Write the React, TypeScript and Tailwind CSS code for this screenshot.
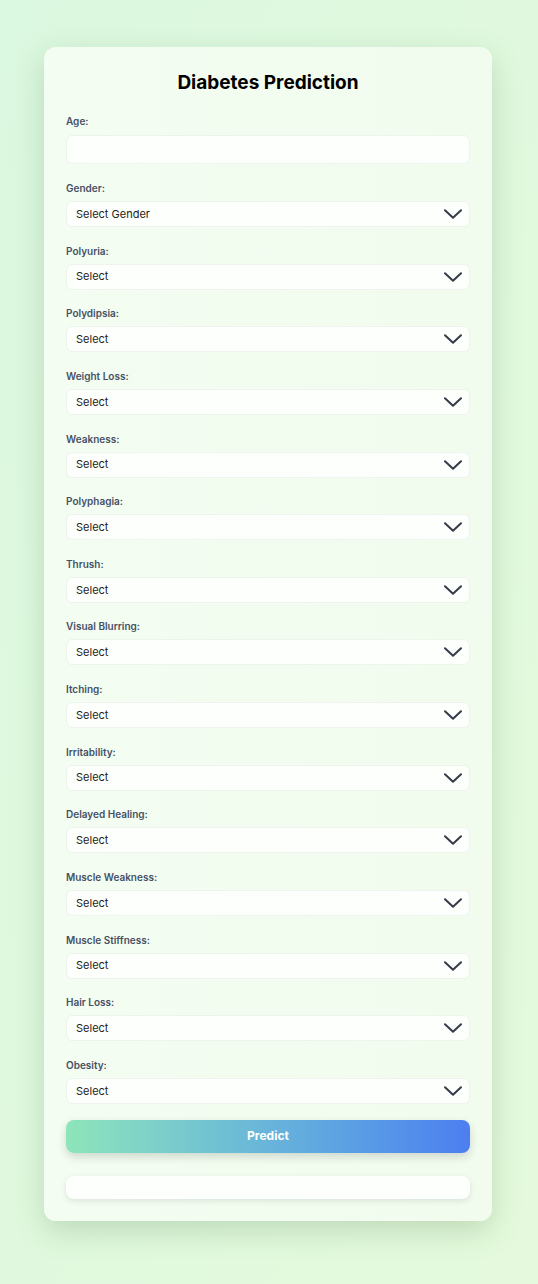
// diabetes prediction form

const fields = [
  "Polyuria",
  "Polydipsia",
  "Weight Loss",
  "Weakness",
  "Polyphagia",
  "Thrush",
  "Visual Blurring",
  "Itching",
  "Irritability",
  "Delayed Healing",
  "Muscle Weakness",
  "Muscle Stiffness",
  "Hair Loss",
  "Obesity",
];

function Chevron() {
  return (
    <svg
      width="18"
      height="10"
      viewBox="0 0 18 10"
      fill="none"
      className="absolute right-[7px] top-1/2 -translate-y-1/2 pointer-events-none"
    >
      <path d="M1 1.2 L9 8.8 L17 1.2" stroke="#363b4a" strokeWidth="2" strokeLinecap="round" strokeLinejoin="round" />
    </svg>
  );
}

function SelectField({ label, placeholder }: { label: string; placeholder: string }) {
  return (
    <div className="flex flex-col mb-[17.64px]">
      <label className="text-[10px] leading-[12px] font-semibold text-[#475066] mb-[7px]">{label}:</label>
      <div className="relative h-[26px] rounded-[6px] bg-[#fdfffc] border border-[#eef3ee] flex items-center pl-[9px] text-[11px] text-[#222]">
        {placeholder}
        <Chevron />
      </div>
    </div>
  );
}

export default function App() {
  return (
    <div
      className="min-h-screen w-full bg-gradient-to-br from-[#dbf8e0] to-[#e5fadc] pt-[47px] pb-[63px]"
      style={{ fontFamily: "Inter, 'Noto Sans', sans-serif" }}
    >
      <div className="w-[448px] ml-[44px] rounded-[12px] bg-gradient-to-r from-[#f3fdf1] to-[#f1fcef] shadow-[0_10px_30px_rgba(60,110,60,0.22)] px-[22px] pt-[23px] pb-[22px]">
        <h1 className="text-center text-[19px] leading-[26px] font-bold text-black mb-[19px]">Diabetes Prediction</h1>

        <div className="flex flex-col mb-[18px]">
          <label className="text-[10px] leading-[12px] font-semibold text-[#475066] mb-[8px]">Age:</label>
          <div className="h-[29px] rounded-[6px] bg-[#fdfffc] border border-[#eef3ee]" />
        </div>

        <SelectField label="Gender" placeholder="Select Gender" />
        {fields.map((f) => (
          <SelectField key={f} label={f} placeholder="Select" />
        ))}

        <button className="w-full h-[33px] -mt-[1.6px] rounded-[8px] bg-gradient-to-r from-[#8ee5b9] to-[#4d7ef0] text-white text-[12px] font-bold shadow-[0_4px_10px_rgba(0,0,0,0.15)]">
          Predict
        </button>

        <div className="mt-[23px] h-[23px] rounded-[8px] bg-[#fdfffc] shadow-[0_2px_6px_rgba(0,0,0,0.1)]" />
      </div>
    </div>
  );
}
